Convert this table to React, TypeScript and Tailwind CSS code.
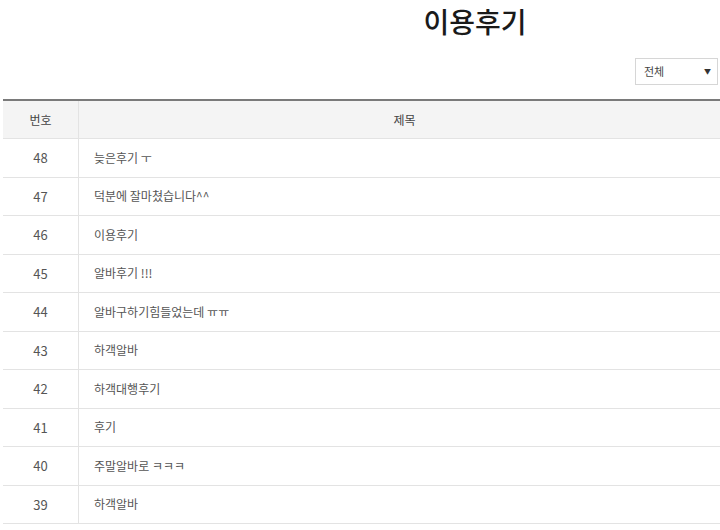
const rows = [
  { no: 48, title: '늦은후기 ㅜ' },
  { no: 47, title: '덕분에 잘마쳤습니다^^' },
  { no: 46, title: '이용후기' },
  { no: 45, title: '알바후기 !!!' },
  { no: 44, title: '알바구하기힘들었는데 ㅠㅠ' },
  { no: 43, title: '하객알바' },
  { no: 42, title: '하객대행후기' },
  { no: 41, title: '후기' },
  { no: 40, title: '주말알바로 ㅋㅋㅋ' },
  { no: 39, title: '하객알바' },
]

const font = "font-['Malgun_Gothic','Noto_Sans_CJK_KR',sans-serif]"

export default function App() {
  return (
    <div className={`w-[720px] h-[530px] overflow-hidden bg-white ${font}`}>
      <div className="w-[727px] ml-[3px]">
        <div className="w-[944px] text-center pt-[1px] h-[40px]">
          <h1 className="text-[28px] leading-[40px] font-medium text-[#1a1a1a]">이용후기</h1>
        </div>

        <div className="flex justify-end pr-[12px] mt-[18px] mb-[14px]">
          <div className="w-[83px] h-[27px] border border-[#d6d6d6] flex items-center justify-between pl-[8px] pr-[6px] text-[11px] text-[#444]">
            <span>전체</span>
            <span className="text-[7px] text-[#333]">▼</span>
          </div>
        </div>

        <div className="border-t-2 border-[#7a7a7a]">
          <div className="flex h-[38px] bg-[#f4f4f4] border-b border-[#e3e3e3] text-[12px] text-[#444]">
            <div className="w-[76px] flex items-center justify-center border-r border-[#e3e3e3]">번호</div>
            <div className="flex-1 flex items-center justify-center">제목</div>
          </div>
          {rows.map((r) => (
            <div key={r.no} className="flex h-[38.5px] border-b border-[#e3e3e3] text-[12px] text-[#555]">
              <div className="w-[76px] flex items-center justify-center border-r border-[#e3e3e3] text-[13px]">{r.no}</div>
              <div className="flex-1 flex items-center pl-[15px]">{r.title}</div>
            </div>
          ))}
        </div>
      </div>
    </div>
  )
}
